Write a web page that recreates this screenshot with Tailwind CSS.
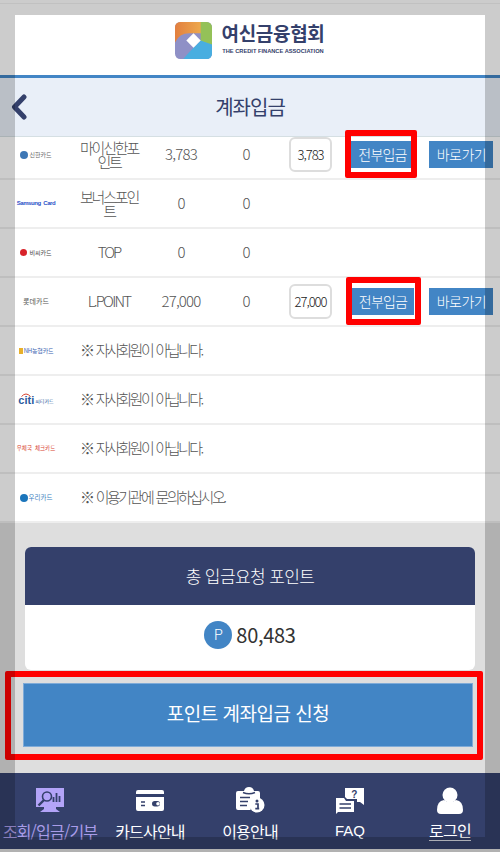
<!DOCTYPE html>
<html lang="ko"><head><meta charset="utf-8">
<script src="https://cdn.jsdelivr.net/npm/@tailwindcss/browser@4"></script>
</head>
<body class="bg-white">
<div class="relative w-[500px] h-[852px] overflow-hidden flex flex-col bg-[#dedede] font-['Noto_Sans_CJK_KR','Noto_Sans',sans-serif] text-[#555]">
  <!-- logo header -->
  <header class="h-[75px] shrink-0 bg-white flex items-center justify-center gap-[9px]">
    <svg width="37" height="37" viewBox="0 0 36 36" class="mt-[5px]">
      <defs>
        <clipPath id="lc"><rect width="36" height="36" rx="5"/></clipPath>
        <linearGradient id="og" x1="0" x2="1" y1="0" y2="0"><stop offset="0" stop-color="#e27f3f"/><stop offset="1" stop-color="#efb04f"/></linearGradient>
      </defs>
      <g clip-path="url(#lc)">
        <rect width="36" height="36" fill="#8f90c6"/>
        <path d="M0 0H30V11H14Q4 11 0 20Z" fill="url(#og)"/>
        <path d="M25 0H36V26H24L25 18L25 11Z" fill="#94c158"/>
        <path d="M36 22V36H8Q14 29 18 25L25 18Z" fill="#49aee0"/>
        <path d="M18 11L25 18L18 25L11 18Z" fill="#fff"/>
      </g>
    </svg>
    <div class="flex flex-col items-center">
      <span class="text-[19px] leading-[24px] font-bold text-[#34406b] tracking-[-0.3px] whitespace-nowrap">여신금융협회</span>
      <span class="mt-[2px] text-[5.700px] leading-[8px] font-bold text-[#34406b] font-['Liberation_Sans',sans-serif] whitespace-nowrap">THE CREDIT FINANCE ASSOCIATION</span>
    </div>
  </header>
  <!-- title bar -->
  <div class="relative h-[62px] shrink-0 bg-[#e9eff8] border-t-[3px] border-b border-t-[#4285c5] border-b-[#d5dfe3] flex items-center justify-center">
    <svg width="18" height="26" viewBox="0 0 18 26" class="absolute left-[10px] top-[16px]"><path d="M14 3L4.500 13L14 23" fill="none" stroke="#34406b" stroke-width="5" stroke-linecap="round" stroke-linejoin="round"/></svg>
    <h1 class="text-[20px] font-normal text-[#34406b] tracking-[-1px] pb-[1px]">계좌입금</h1>
  </div>
  <!-- table -->
  <div class="h-[386px] shrink-0 overflow-hidden bg-white text-[15px] tracking-[-2.5px] [word-spacing:1.500px] font-light">
    <div class="mt-[-6px]">
      <div class="h-[49px] border-b-2 border-[#eee] flex items-center">
        <div class="w-[77px] pl-[15px] pr-[20px] flex justify-center items-center gap-[1px]"><span class="w-[8px] h-[8px] rounded-full bg-[#3d77b5]"></span><span class="text-[6px] tracking-normal text-[#666] font-normal whitespace-nowrap">신한카드</span></div>
        <div class="w-[64px] text-center leading-[14px] tracking-[-2.2px] break-all">마이신한포인트</div>
        <div class="w-[80px] text-center tracking-[-0.8px]">3,783</div>
        <div class="w-[50px] text-center tracking-[-0.8px]">0</div>
        <div class="ml-[18px] w-[43px] h-[35px] border-2 border-[#ddd] rounded-[6px] flex items-center justify-center text-[13px] text-[#222] tracking-[-1px]">3,783</div>
        <button class="ml-[19px] w-[61px] h-[27px] pl-[2px] bg-[#4285c5] text-white text-[14px] tracking-[-0.8px]">전부입금</button>
        <button class="ml-[17px] w-[64px] h-[27px] pl-[1px] bg-[#4285c5] text-white text-[14px] tracking-[-0.5px]">바로가기</button>
      </div>
      <div class="h-[49px] border-b-2 border-[#eee] flex items-center">
        <div class="w-[77px] pl-[15px] pr-[20px] flex justify-center"><span class="text-[6px] font-bold tracking-[-0.45px] text-[#2b50c8] whitespace-nowrap font-['Liberation_Sans',sans-serif]">Samsung Card</span></div>
        <div class="w-[64px] text-center leading-[14px] tracking-[-2.2px] break-all">보너스포인트</div>
        <div class="w-[80px] text-center tracking-[-0.8px]">0</div>
        <div class="w-[50px] text-center tracking-[-0.8px]">0</div>
      </div>
      <div class="h-[49px] border-b-2 border-[#eee] flex items-center">
        <div class="w-[77px] pl-[15px] pr-[20px] flex justify-center items-center gap-[2px]"><span class="w-[7px] h-[7px] rounded-full bg-[#d8232a]"></span><span class="text-[6px] tracking-normal text-[#444] font-normal whitespace-nowrap">비씨카드</span></div>
        <div class="w-[64px] text-center tracking-[-2px]">TOP</div>
        <div class="w-[80px] text-center tracking-[-0.8px]">0</div>
        <div class="w-[50px] text-center tracking-[-0.8px]">0</div>
      </div>
      <div class="h-[49px] border-b-2 border-[#eee] flex items-center">
        <div class="w-[77px] pl-[15px] pr-[20px] flex justify-center"><span class="text-[7px] tracking-normal text-[#555] font-normal whitespace-nowrap">롯데카드</span></div>
        <div class="w-[64px] text-center tracking-[-1.800px] whitespace-nowrap">L.POINT</div>
        <div class="w-[80px] text-center tracking-[-0.8px]">27,000</div>
        <div class="w-[50px] text-center tracking-[-0.8px]">0</div>
        <div class="ml-[18px] w-[43px] h-[35px] border-2 border-[#ddd] rounded-[6px] flex items-center justify-center text-[13px] text-[#222] tracking-[-1px]">27,000</div>
        <button class="ml-[19px] w-[63px] h-[27px] pl-[1px] bg-[#4285c5] text-white text-[14px] tracking-[-0.8px]">전부입금</button>
        <button class="ml-[15px] w-[64px] h-[27px] pl-[1px] bg-[#4285c5] text-white text-[14px] tracking-[-0.5px]">바로가기</button>
      </div>
      <div class="h-[49px] border-b-2 border-[#eee] flex items-center">
        <div class="w-[80px] pl-[12px] pr-[20px] flex justify-center items-center gap-[1px]"><span class="w-[4px] h-[6px] bg-[#e8b02a]"></span><span class="text-[6px] tracking-[-0.2px] text-[#3a62b0] font-normal whitespace-nowrap">NH농협카드</span></div>
        <div>※ 자사회원이 아닙니다.</div>
      </div>
      <div class="h-[49px] border-b-2 border-[#eee] flex items-center">
        <div class="w-[80px] pl-[12px] pr-[20px] flex justify-center items-end gap-[1px]">
          <span class="relative text-[11px] font-bold tracking-normal text-[#2a5a9e] leading-[10px] font-['Liberation_Sans',sans-serif]">citi<svg width="10" height="4" viewBox="0 0 10 4" class="absolute left-[3px] top-[-2px]"><path d="M0.500 3.500Q5 -1.500 9.500 3.500" fill="none" stroke="#d8432f" stroke-width="1"/></svg></span>
          <span class="text-[5px] leading-[8px] tracking-normal font-normal text-[#2a5a9e] whitespace-nowrap">씨티카드</span>
        </div>
        <div>※ 자사회원이 아닙니다.</div>
      </div>
      <div class="h-[49px] border-b-2 border-[#eee] flex items-center">
        <div class="w-[80px] pl-[12px] pr-[20px] flex justify-center"><span class="text-[5.500px] tracking-normal font-normal text-[#d9432f] whitespace-nowrap">우체국 체크카드</span></div>
        <div>※ 자사회원이 아닙니다.</div>
      </div>
      <div class="h-[49px] border-b-2 border-[#eee] flex items-center">
        <div class="w-[80px] pl-[12px] pr-[20px] flex justify-center items-center gap-[1px]"><span class="w-[8px] h-[8px] rounded-full bg-[#1b75bb]"></span><span class="text-[6.500px] tracking-normal font-normal text-[#3a7fc0] whitespace-nowrap">우리카드</span></div>
        <div>※ 이용기관에 문의하십시오.</div>
      </div>
    </div>
  </div>
  <!-- summary -->
  <div class="flex-1 flex flex-col px-[25px] pt-[24px]">
    <div class="h-[123px] rounded-[6px] overflow-hidden bg-white flex flex-col shrink-0">
      <div class="h-[58px] bg-[#34406b] text-white flex items-center justify-center text-[17px] tracking-[-0.6px] font-light">총 입금요청 포인트</div>
      <div class="flex-1 flex items-center justify-center gap-[4px] pb-[6px]">
        <span class="w-[28px] h-[28px] rounded-full bg-[#4285c5] text-white text-[15px] flex items-center justify-center font-light">P</span>
        <span class="text-[20px] text-[#333] tracking-[-0.3px]">80,483</span>
      </div>
    </div>
    <button class="ml-[-2px] mt-[13px] w-[450px] h-[64px] pb-[3px] bg-[#4285c5] border border-[#7fabd8] text-white text-[19px] tracking-[-0.5px] font-normal">포인트 계좌입금 신청</button>
  </div>
  <!-- bottom nav -->
  <nav class="h-[76px] shrink-0 mb-[3px] bg-[#34406b] grid grid-cols-5 text-white text-[16px] leading-[20px] text-center tracking-[-0.8px] font-normal">
    <a class="flex flex-col items-center pt-[14px] text-[#a99ce8]">
      <svg width="30" height="26" viewBox="0 0 30 26" class="mb-[8px]">
        <path d="M1 1H29V20H1Z" fill="#b3a4f8"/>
        <path d="M9 20H21V22L25 25H5L9 22Z" fill="#b3a4f8"/>
        <circle cx="12" cy="9.500" r="4.500" fill="#b3a4f8" stroke="#34406b" stroke-width="1.600"/>
        <path d="M9 13L3.500 18.500" stroke="#34406b" stroke-width="2.400"/>
        <path d="M18.500 15V10M21.500 15V6M24.500 15V9" stroke="#34406b" stroke-width="1.800"/>
      </svg>
      <span class="whitespace-nowrap">조회/입금/기부</span>
    </a>
    <a class="flex flex-col items-center pt-[14px]">
      <svg width="30" height="26" viewBox="0 0 30 26" class="mb-[8px]">
        <path d="M1 5Q1 3 3 3H27Q29 3 29 5V7H1ZM1 10H29V22Q29 24 27 24H3Q1 24 1 22Z" fill="#fff"/>
        <path d="M6 15H10M6 18.500H10" stroke="#34406b" stroke-width="1.400"/>
        <rect x="17" y="14" width="8" height="5.500" rx="2.750" fill="#34406b"/><circle cx="23" cy="16.750" r="1.800" fill="#fff"/>
      </svg>
      <span class="whitespace-nowrap">카드사안내</span>
    </a>
    <a class="flex flex-col items-center pt-[14px]">
      <svg width="30" height="26" viewBox="0 0 30 26" class="mb-[8px]">
        <path d="M3 4H9Q10 0 14 0Q18 0 19 4H23Q25 4 25 6V11Q17 12 15.500 23H3Q1 23 1 21V6Q1 4 3 4Z" fill="#fff"/>
        <path d="M8 5.500Q14 8 20 5.500" fill="none" stroke="#34406b" stroke-width="1.500"/>
        <path d="M5 10.500H15M5 14.500H13M5 18.500H12" stroke="#34406b" stroke-width="1.600"/>
        <circle cx="22" cy="18" r="7.500" fill="#fff"/>
        <circle cx="22" cy="14" r="1.500" fill="#34406b"/><path d="M20.300 17H23V21.500H24.200M20.300 21.700H24.200" fill="none" stroke="#34406b" stroke-width="1.700"/>
      </svg>
      <span class="whitespace-nowrap">이용안내</span>
    </a>
    <a class="flex flex-col items-center pt-[14px]">
      <svg width="30" height="28" viewBox="0 0 30 28" class="mb-[6px]">
        <path d="M1 27V11H9L11 14H19V25H3Z" fill="#fff"/>
        <path d="M4.500 17H16M4.500 21H16" stroke="#34406b" stroke-width="1.400"/>
        <path d="M10 1H29V18L25 15H22V12H12L10 10Z" fill="#fff"/>
        <text x="19" y="11" text-anchor="middle" font-size="10" font-weight="700" fill="#34406b" font-family="Liberation Sans">?</text>
      </svg>
      <span class="font-['Liberation_Sans',sans-serif] text-[15px] tracking-normal">FAQ</span>
    </a>
    <a class="flex flex-col items-center pt-[14px]">
      <svg width="30" height="28" viewBox="0 0 30 28" class="mb-[6px]">
        <circle cx="15" cy="8" r="7.500" fill="#fff"/>
        <path d="M2 23Q2 14 9 13Q15 17 21 13Q28 14 28 23Q28 27 24 27H6Q2 27 2 23Z" fill="#fff"/>
      </svg>
      <span class="whitespace-nowrap border-b border-white/80 leading-[19px]">로그인</span>
    </a>
  </nav>
  <!-- annotation boxes -->
  <div class="absolute left-[345px] top-[130px] w-[72px] h-[48px] border-[6px] border-[#f00] rounded-[2px]"></div>
  <div class="absolute left-[346px] top-[277px] w-[75px] h-[48px] border-[6px] border-[#f00] rounded-[2px]"></div>
  <div class="absolute left-[5px] top-[671px] w-[478px] h-[89px] border-[6px] border-[#f00] rounded-[2px]"></div>
  <!-- translucent frame over the page -->
  <div class="absolute inset-0 border-[15px] border-black/20 pointer-events-none"></div>
  <div class="absolute left-0 right-0 top-[3px] h-[1px] bg-black/5"></div>
</div>
</body></html>
